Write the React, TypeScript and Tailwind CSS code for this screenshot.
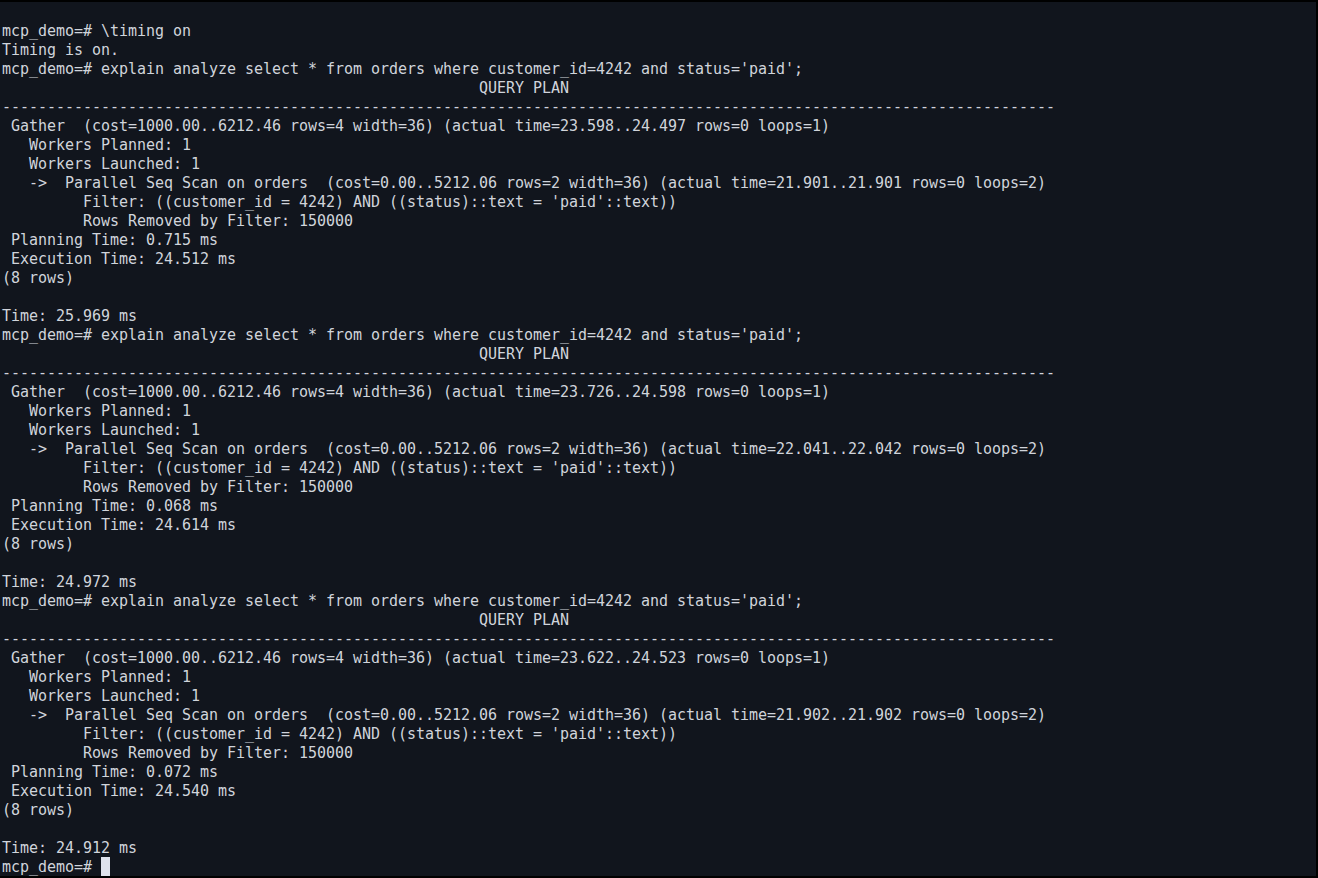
import React from "react";

const DASHES = "-".repeat(117);
const HEADER = " ".repeat(53) + "QUERY PLAN";

interface RunProps {
  gather: string;
  scan: string;
  planning: string;
  execution: string;
  total: string;
}

// one "explain analyze" round in psql
function planBlock(r: RunProps): string[] {
  return [
    "mcp_demo=# explain analyze select * from orders where customer_id=4242 and status='paid';",
    HEADER,
    DASHES,
    ` Gather  (cost=1000.00..6212.46 rows=4 width=36) (actual time=${r.gather} rows=0 loops=1)`,
    "   Workers Planned: 1",
    "   Workers Launched: 1",
    `   ->  Parallel Seq Scan on orders  (cost=0.00..5212.06 rows=2 width=36) (actual time=${r.scan} rows=0 loops=2)`,
    "         Filter: ((customer_id = 4242) AND ((status)::text = 'paid'::text))",
    "         Rows Removed by Filter: 150000",
    ` Planning Time: ${r.planning} ms`,
    ` Execution Time: ${r.execution} ms`,
    "(8 rows)",
    "",
    `Time: ${r.total} ms`,
  ];
}

const runs: RunProps[] = [
  { gather: "23.598..24.497", scan: "21.901..21.901", planning: "0.715", execution: "24.512", total: "25.969" },
  { gather: "23.726..24.598", scan: "22.041..22.042", planning: "0.068", execution: "24.614", total: "24.972" },
  { gather: "23.622..24.523", scan: "21.902..21.902", planning: "0.072", execution: "24.540", total: "24.912" },
];

const lines: string[] = [
  "mcp_demo=# \\timing on",
  "Timing is on.",
  ...runs.flatMap(planBlock),
];

export default function App() {
  return (
    <div className="w-[1318px] h-[878px] bg-black overflow-hidden">
      <div
        className="h-[874px] w-[1316px] mt-[2px] bg-[#11151d] pt-[19px] pl-[2px] text-[#d0d4db] text-[15px] tracking-[-0.03px]"
        style={{ fontFamily: '"DejaVu Sans Mono", "Liberation Mono", monospace' }}
      >
        {lines.map((line, i) => (
          <div key={i} className="h-[19px] pt-[1px] leading-[19px] whitespace-pre">
            {line}
          </div>
        ))}
        <div className="h-[19px] pt-[1px] leading-[18px] whitespace-pre flex">
          <span>mcp_demo=# </span>
          <span className="inline-block w-[9px] h-[19px] -mt-[1px] bg-[#dfe2ec]"></span>
        </div>
      </div>
    </div>
  );
}
